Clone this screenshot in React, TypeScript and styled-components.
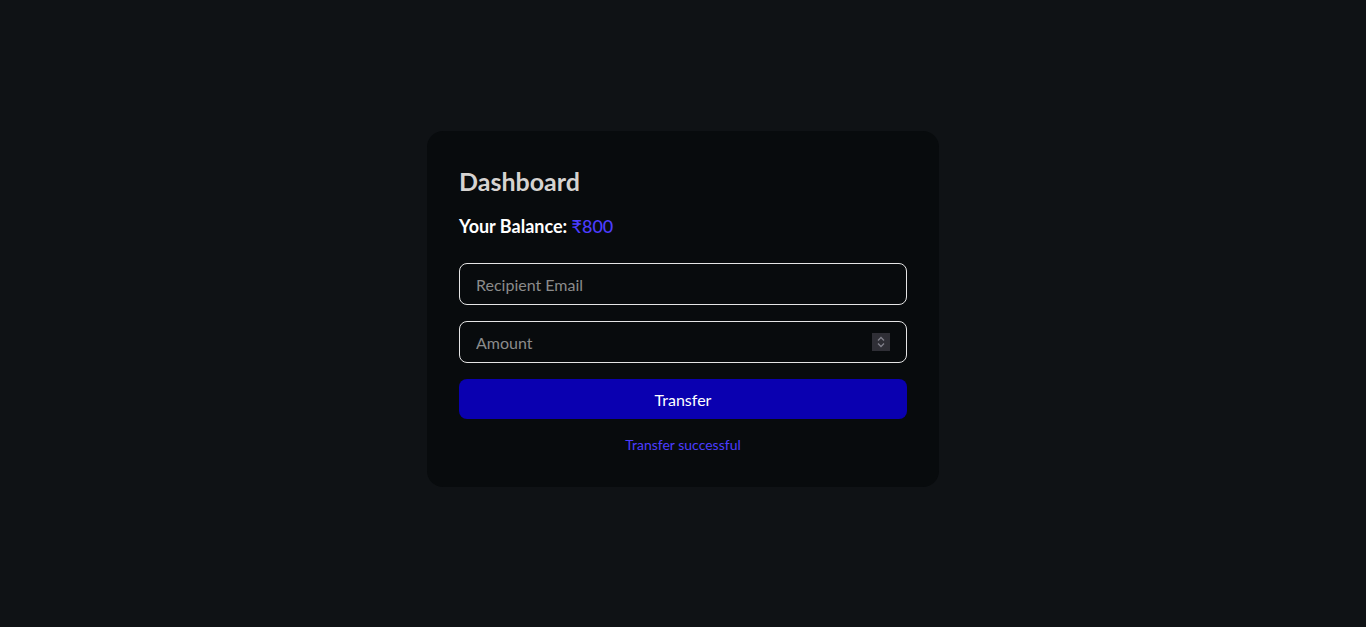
import React, { useState } from 'react';
import styled, { createGlobalStyle } from 'styled-components';

const GlobalStyle = createGlobalStyle`
  html, body {
    margin: 0;
    padding: 0;
    background: #0f1215;
    color-scheme: dark;
  }
  body {
    font-family: Lato, "Noto Sans", "Liberation Sans", sans-serif;
  }
  * {
    box-sizing: border-box;
  }
`;

const Page = styled.div`
  min-height: 627px;
  display: flex;
  justify-content: center;
  padding-top: 131px;
`;

const Card = styled.div`
  width: 512px;
  height: 356px;
  background: #080b0d;
  border-radius: 16px;
  padding: 32px;
  display: flex;
  flex-direction: column;
`;

const Title = styled.h1`
  margin: 0;
  font-size: 25px;
  line-height: 36px;
  font-weight: 700;
  color: #d6d3d1;
`;

const Balance = styled.p`
  margin: 13px 0 0;
  font-size: 18px;
  line-height: 28px;
  font-weight: 700;
  color: #ffffff;

  span {
    color: #4c3dff;
    font-weight: 500;
  }
`;

const Form = styled.form`
  margin-top: 23px;
  display: flex;
  flex-direction: column;
  gap: 16px;
`;

const Field = styled.div`
  position: relative;
`;

const Input = styled.input`
  display: block;
  width: 100%;
  height: 42px;
  padding: 0 16px;
  background: #080b0d;
  border: 1px solid #e5e5e5;
  border-radius: 8px;
  color: #ffffff;
  font-family: inherit;
  font-size: 16px;
  outline: none;
  -moz-appearance: textfield;

  &::placeholder {
    color: #8b8b8b;
  }

  &::-webkit-inner-spin-button,
  &::-webkit-outer-spin-button {
    -webkit-appearance: none;
    margin: 0;
  }
`;

const Spinner = styled.div`
  position: absolute;
  right: 17px;
  top: 12px;
  width: 18px;
  height: 18px;
  background: #2f2f36;
  display: grid;
  place-items: center;
  pointer-events: none;
`;

const Button = styled.button`
  height: 40px;
  border: none;
  border-radius: 8px;
  background: #0a00b0;
  color: #ffffff;
  font-family: inherit;
  font-size: 16px;
  cursor: pointer;
`;

const Message = styled.p`
  margin: 16px 0 0;
  text-align: center;
  font-size: 14px;
  line-height: 20px;
  color: #4c3dff;
`;

export default function App() {
  const [email, setEmail] = useState('');
  const [amount, setAmount] = useState('');

  return (
    <>
      <GlobalStyle />
      <Page>
        <Card>
          <Title>Dashboard</Title>
          <Balance>
            Your Balance: <span>₹800</span>
          </Balance>
          <Form onSubmit={(e) => e.preventDefault()}>
            <Field>
              <Input
                type="email"
                placeholder="Recipient Email"
                value={email}
                onChange={(e) => setEmail(e.target.value)}
              />
            </Field>
            <Field>
              <Input
                type="number"
                placeholder="Amount"
                value={amount}
                onChange={(e) => setAmount(e.target.value)}
              />
              <Spinner>
                <svg width="10" height="12" viewBox="0 0 10 12" fill="none">
                  <path d="M2 4.5 L5 1.5 L8 4.5" stroke="#80808a" strokeWidth="1.3" />
                  <path d="M2 7.5 L5 10.5 L8 7.5" stroke="#80808a" strokeWidth="1.3" />
                </svg>
              </Spinner>
            </Field>
            <Button type="submit">Transfer</Button>
          </Form>
          <Message>Transfer successful</Message>
        </Card>
      </Page>
    </>
  );
}
